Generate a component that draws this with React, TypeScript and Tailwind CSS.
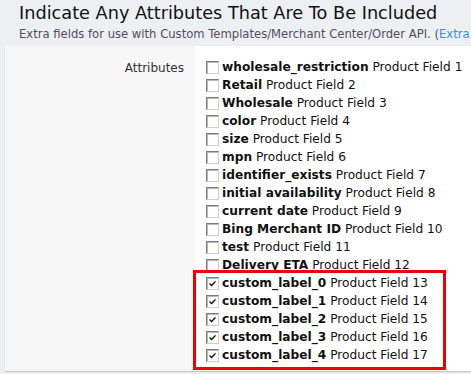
import React from 'react';

const FIELDS = [
  'wholesale_restriction',
  'Retail',
  'Wholesale',
  'color',
  'size',
  'mpn',
  'identifier_exists',
  'initial availability',
  'current date',
  'Bing Merchant ID',
  'test',
  'Delivery ETA',
  'custom_label_0',
  'custom_label_1',
  'custom_label_2',
  'custom_label_3',
  'custom_label_4',
];

function Box({ checked }: { checked: boolean }) {
  return (
    <span className="relative inline-block w-[13px] h-[13px] shrink-0 bg-white border border-t-[#7c7c7c] border-l-[#7c7c7c] border-r-[#cfcfcf] border-b-[#cfcfcf] shadow-[inset_1px_1px_0_#b9b9b9]">
      {checked && (
        <svg viewBox="0 0 11 11" className="absolute left-0 top-0 w-[11px] h-[11px]">
          <path d="M2.5 4.5 L4.5 6.5 L8.5 2.5 L8.5 4.5 L4.5 8.5 L2.5 6.5 Z" fill="#111" />
        </svg>
      )}
    </span>
  );
}

function Row({ name, n, checked }: { name: string; n: number; checked: boolean }) {
  return (
    <label className="flex items-center h-[18px] gap-[3px] whitespace-nowrap">
      <Box checked={checked} />
      <span className="text-[#111]">
        <b className="font-bold">{name}</b> Product Field {n}
      </span>
    </label>
  );
}

export default function App() {
  const top = FIELDS.slice(0, 12);
  const marked = FIELDS.slice(12);

  return (
    <div className="w-[471px] h-[374px] overflow-hidden bg-[#edf0f2]" style={{ fontFamily: '"DejaVu Sans", Verdana, sans-serif' }}>
      <div className="pl-[19px] pt-[2px] h-[46px] whitespace-nowrap overflow-hidden">
        <h1 className="text-[17.7px] leading-[22px] text-[#111]">Indicate Any Attributes That Are To Be Included</h1>
        <p className="text-[11.6px] leading-[16px] mt-[2px] text-[#554a5f]">
          Extra fields for use with Custom Templates/Merchant Center/Order API. (<span className="text-[#3b8fd4]">Extra</span>
        </p>
      </div>

      <div className="ml-[5px] flex bg-white h-[325px] shadow-[0_1px_1px_#c4c8cb]">
        <div className="w-[190px] shrink-0 bg-[#f7f7f7] text-right pr-[11px] pt-[13px] text-[12px] text-[#333]">
          Attributes
        </div>
        <div className="flex-1 pt-[12px] text-[12.2px]">
          <div className="pl-[11px]">
            {top.map((f, i) => (
              <Row key={f} name={f} n={i + 1} checked={false} />
            ))}
          </div>
          <div className="relative -mt-[4px] -ml-[2px] w-[253px] border-[3px] border-[#ee0000] pl-[10px] pt-[1px] pb-[3px]">
            {marked.map((f, i) => (
              <Row key={f} name={f} n={i + 13} checked={true} />
            ))}
          </div>
        </div>
      </div>
    </div>
  );
}
